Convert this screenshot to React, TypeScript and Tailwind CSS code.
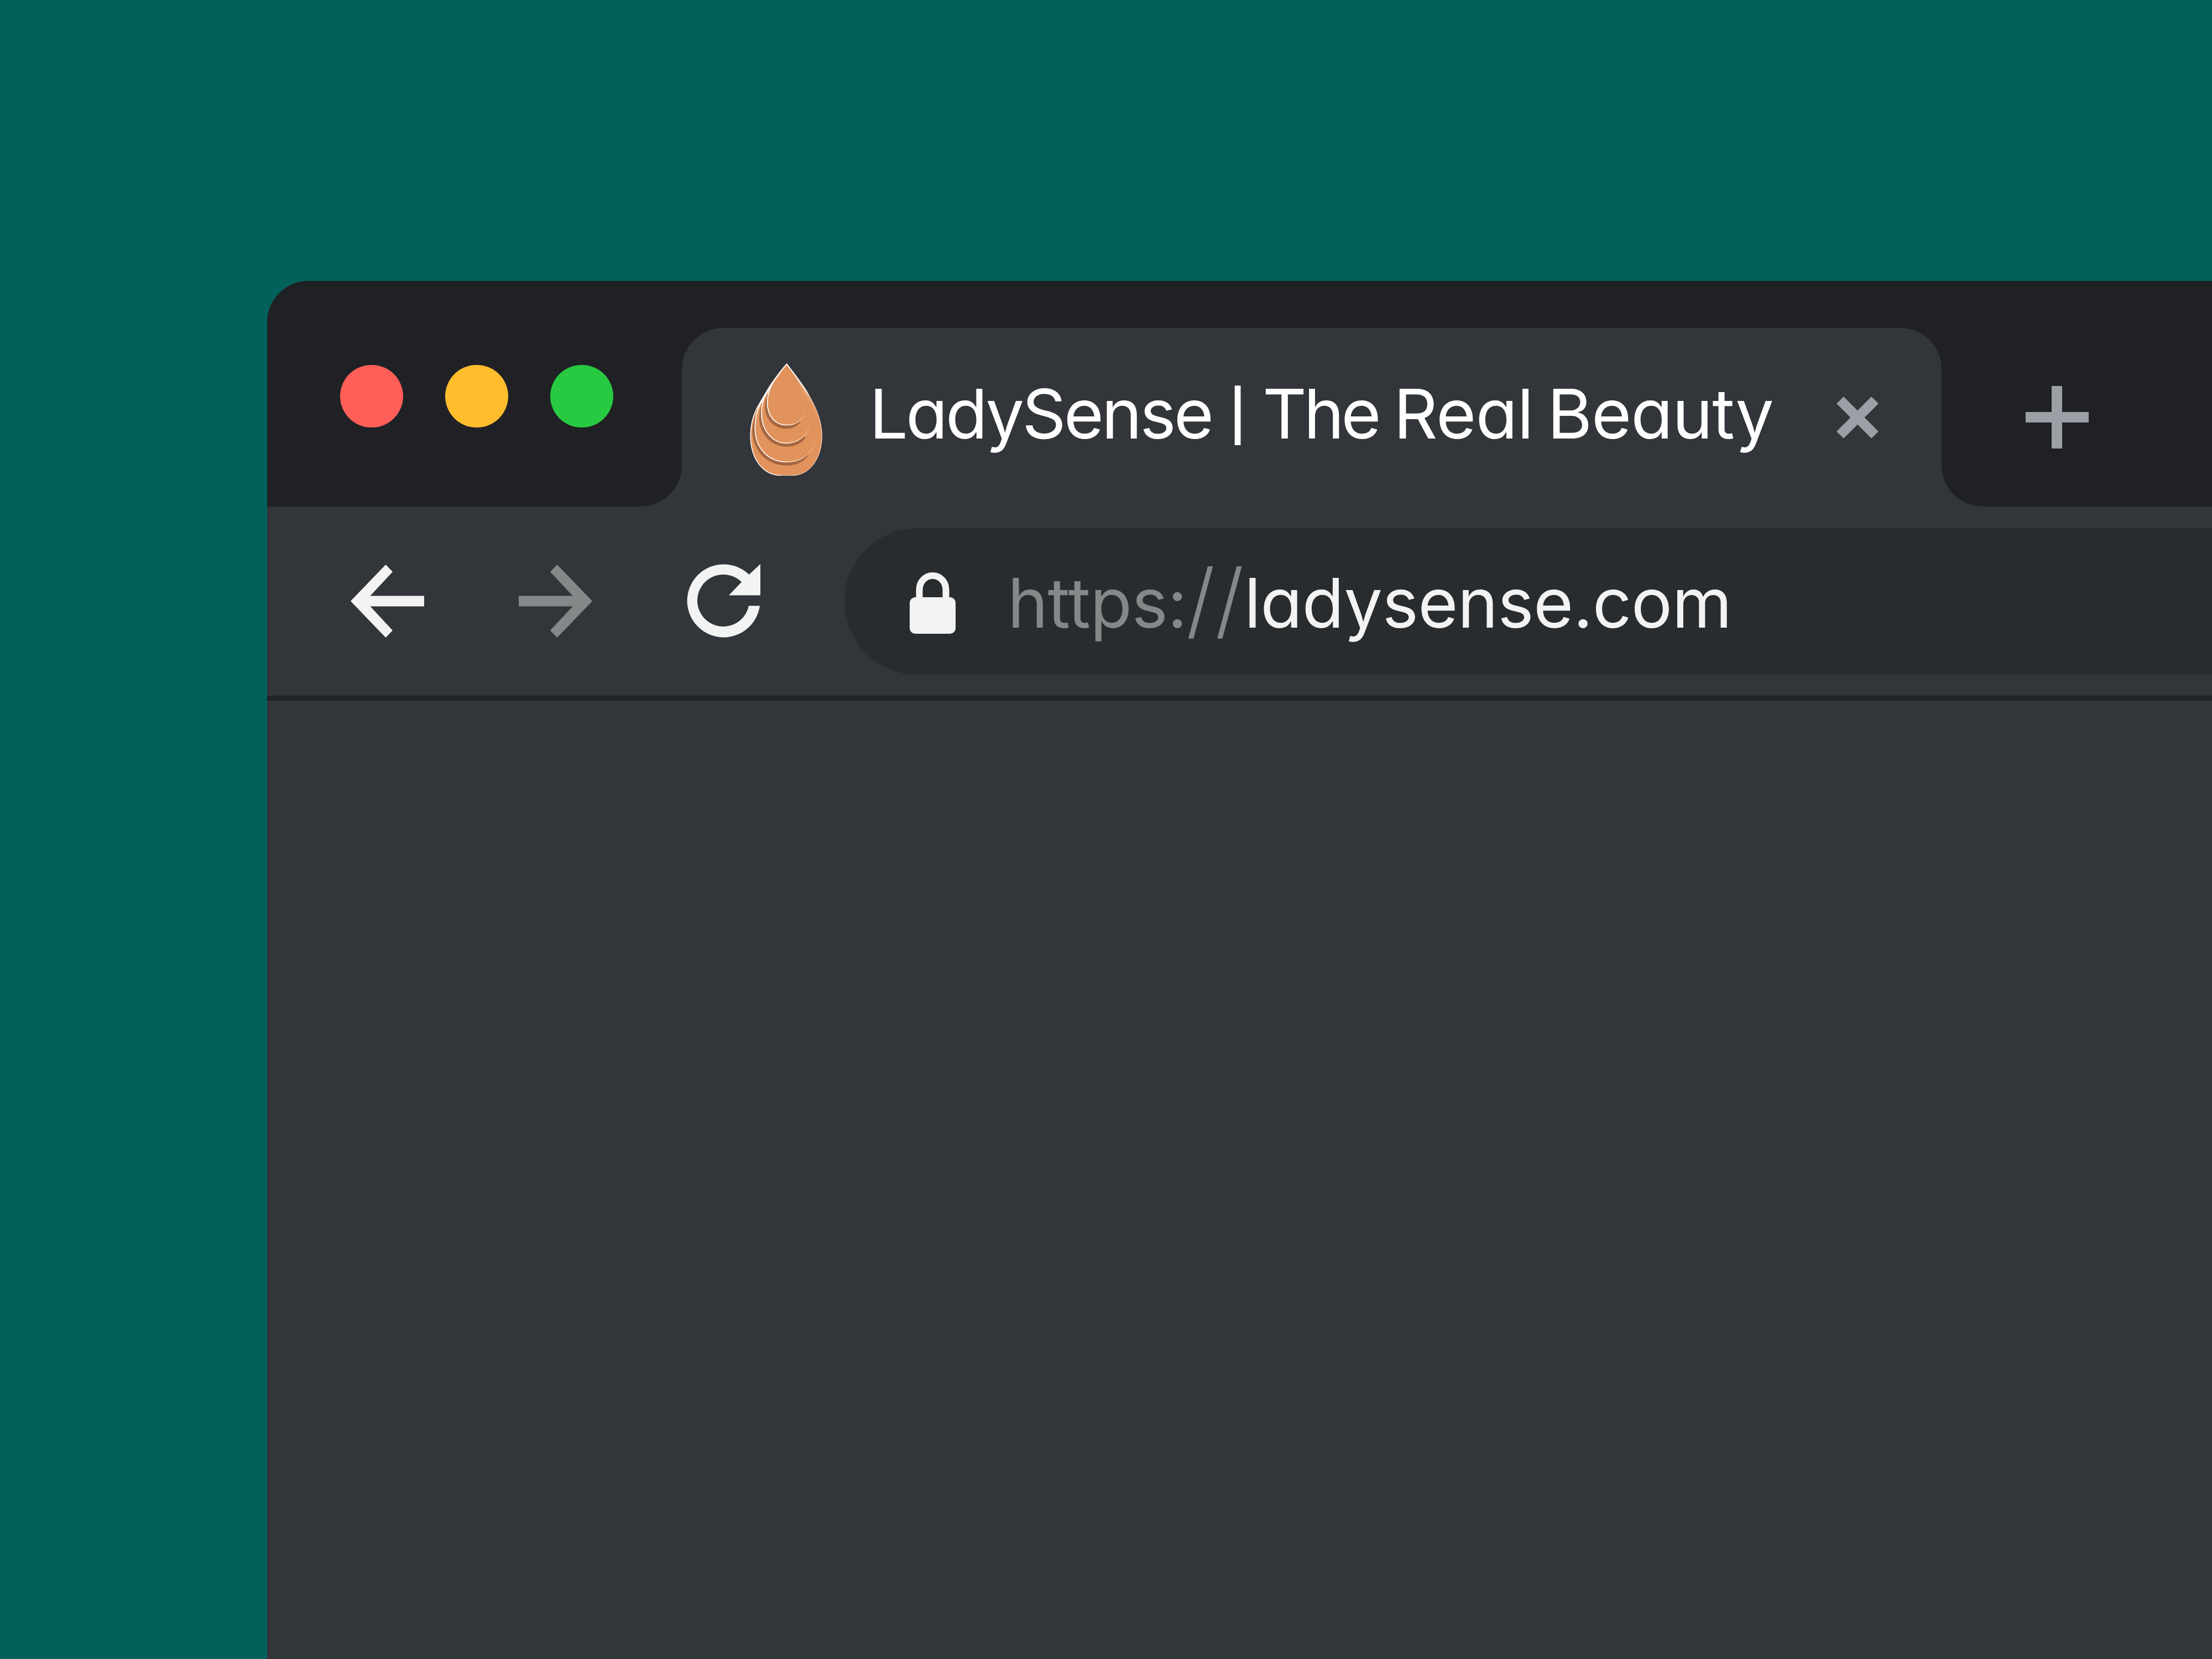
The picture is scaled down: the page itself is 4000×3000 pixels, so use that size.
import React from "react";

const titleWords = [
  { text: "LadySense", className: "w-[650px] tracking-[-4px]" },
  { text: "|", className: "w-[61px] -translate-y-[9px] text-[90px] font-semibold" },
  { text: "The", className: "w-[237px] tracking-[-5.5px]" },
  { text: "Real", className: "w-[278px] tracking-[-0.9px]" },
  { text: "Beauty", className: "w-[523px] tracking-[-1.1px]" },
];

const trafficLights = ["bg-[#ff5f58]", "bg-[#ffbd2e]", "bg-[#28ca42]"];

function DropLogo() {
  return (
    <svg className="mt-[62px] h-[210px] w-[140px] shrink-0" viewBox="66 45 420 630" strokeLinejoin="round">
      <defs>
        <linearGradient id="rim" x1="0" x2="1" y1="0" y2="0">
          <stop offset="0" stopColor="#fff" />
          <stop offset="0.5" stopColor="#fde9da" />
          <stop offset="0.85" stopColor="#f0b88f" />
          <stop offset="1" stopColor="#e2935c" />
        </linearGradient>
      </defs>
      {/* Outer drop */}
      <path
        d="M278 55C320 110 372 172 402 230C442 300 469 370 469 445C469 570 400 659 310 659H245C150 659 81 570 81 445C81 380 98 325 124 280C160 215 230 115 278 55Z"
        fill="#e2935c"
        stroke="#fbe3d2"
        strokeWidth="3"
      />
      {/* Third layer */}
      <path d="M150 260C100 330 83 400 95 455C115 550 190 605 275 605C330 605 375 585 398 545Z" fill="#a5663f" />
      <path
        d="M278 55C215 145 106 250 106 400C106 520 185 586 280 586C380 586 445 510 445 410C445 260 350 150 278 55Z"
        fill="#e2935c"
        stroke="url(#rim)"
        strokeWidth="5"
      />
      {/* Second layer */}
      <path d="M165 230C128 290 122 350 136 395C160 470 220 503 275 503C320 503 360 485 380 455Z" fill="#a5663f" />
      <path
        d="M278 55C205 145 141 215 141 320C141 420 205 484 275 484C350 484 412 430 412 330C412 230 340 140 278 55Z"
        fill="#e2935c"
        stroke="url(#rim)"
        strokeWidth="5"
      />
      {/* Front layer */}
      <path d="M178 215C155 260 155 310 172 342C195 390 240 406 275 406C310 406 340 390 352 368Z" fill="#a5663f" />
      <path
        d="M278 55C215 125 173 190 173 265C173 340 215 386 280 386C345 386 384 340 384 270C384 200 330 125 278 55Z"
        fill="#e2935c"
        stroke="url(#rim)"
        strokeWidth="5"
      />
      {/* Highlights along the left side and right shoulder */}
      <path d="M278 55C235 108 165 205 122 285L121 302C145 255 168 225 180 200C195 165 240 100 278 55Z" fill="#fff" />
      <path
        d="M245 659C150 659 82 570 82 445C82 380 98 325 124 280C160 215 230 115 278 55C320 110 362 160 396 222"
        fill="none"
        stroke="#fff"
        strokeWidth="4"
      />
    </svg>
  );
}

function BackIcon({ className }: { className: string }) {
  return (
    <svg className={`h-[132px] w-[133px] shrink-0 ${className}`} viewBox="0 0 133 132" fill="currentColor">
      <path d="M0 66L63.5 0L76 13L35.5 56.5H133V75.5H35.5L76 119L63.5 132Z" />
    </svg>
  );
}

function ReloadIcon() {
  return (
    <svg className="mb-0.5 ml-[171px] h-[133px] w-[133px] shrink-0 text-[#f2f3f3]" viewBox="0 0 133 133" fill="currentColor">
      <path d="M112.5 19A66 66 0 1 0 132 75.5H112A47 47 0 1 1 99 32.5L76 56.5H133V0Z" />
    </svg>
  );
}

function LockIcon() {
  return (
    <svg className="mt-20 h-[111px] w-[83px] shrink-0" viewBox="0 0 83 111">
      <path d="M17.5 50V32C17.5 17 28 6 41.5 6S65.5 17 65.5 32V50" fill="none" stroke="#f3f3f3" strokeWidth="12" />
      <rect y="45" width="83" height="66" rx="10" fill="#f3f3f3" />
    </svg>
  );
}

function TabStrip() {
  return (
    <div className="flex h-[408px] bg-[#323539]">
      {/* Window controls */}
      <div className="flex w-[750px] shrink-0 gap-[76px] rounded-br-[75px] bg-[#202124] pt-[152px] pl-[132px]">
        {trafficLights.map((color) => (
          <div key={color} className={`h-[113px] w-[114px] shrink-0 rounded-full ${color}`} />
        ))}
      </div>

      {/* Active tab */}
      <div className="w-[2278px] shrink-0 bg-[#202124] pt-[85px]">
        <div className="flex h-[323px] items-start rounded-t-[75px] bg-[#323539] pl-[119px]">
          <DropLogo />
          <div className="mt-[93px] ml-20 flex shrink-0 items-baseline text-[124px] leading-none text-white">
            {titleWords.map((word) => (
              <span key={word.text} className={`shrink-0 whitespace-nowrap ${word.className}`}>
                {word.text}
              </span>
            ))}
          </div>
          <svg className="mt-[124px] h-[76px] w-[76px] shrink-0" viewBox="0 0 76 76">
            <path d="M6.5 6.5L69.5 69.5M69.5 6.5L6.5 69.5" stroke="#9aa0a6" strokeWidth="18" />
          </svg>
        </div>
      </div>

      {/* New tab */}
      <div className="flex-1 rounded-bl-[75px] bg-[#202124] pt-[190px] pl-[152px]">
        <svg className="h-[113px] w-[114px]" viewBox="0 0 114 113">
          <path d="M0 56.5H114M56.5 0V113" stroke="#9aa0a6" strokeWidth="19" />
        </svg>
      </div>
    </div>
  );
}

function Toolbar() {
  return (
    <div className="flex h-[342px] items-center pl-[151px]">
      <BackIcon className="text-[#f3f3f3]" />
      <BackIcon className="ml-[171px] -scale-x-100 text-[#848888]" />
      <ReloadIcon />

      {/* Address bar */}
      <div className="ml-[152px] flex h-[265px] flex-1 items-start rounded-l-full bg-[#282c2e] pl-[118px]">
        <LockIcon />
        <div className="mt-[51px] ml-[94px] flex items-baseline text-[124px] leading-none whitespace-nowrap">
          <span className="w-[323px] tracking-[-0.7px] text-[#848888]">https:</span>
          <span className="w-[105px] translate-y-[3px] text-[150px] font-light text-[#848888]">//</span>
          <span className="tracking-[-0.7px] text-[#f3f3f3]">ladysense.com</span>
        </div>
      </div>
    </div>
  );
}

export default function App() {
  return (
    <div className="h-[3000px] w-[4000px] overflow-hidden bg-[#02615b] pt-[508px] pl-[483px] font-['Inter',sans-serif] [font-feature-settings:'cv11']">
      <div className="flex h-full flex-col overflow-hidden rounded-tl-[75px] bg-[#323539]">
        <TabStrip />
        <Toolbar />
        <div className="h-[9px] bg-[#202224]" />
      </div>
    </div>
  );
}
